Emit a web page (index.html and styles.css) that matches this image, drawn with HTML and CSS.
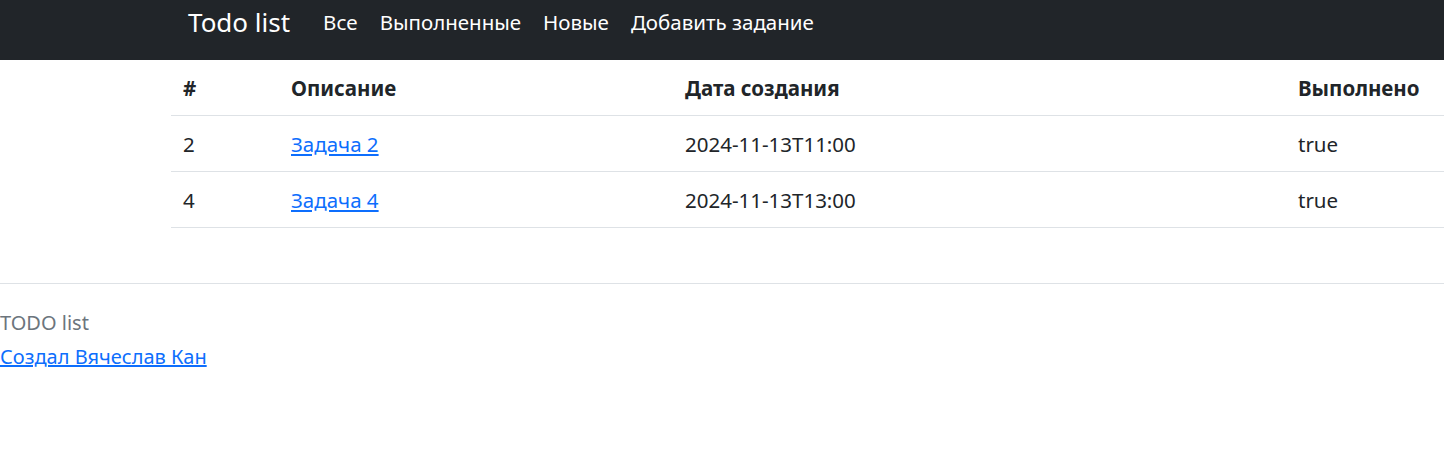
FILE: index.html
```html
<!DOCTYPE html>
<html lang="ru">
<head>
<meta charset="utf-8">
<title>Todo list</title>
<link rel="stylesheet" href="styles.css">
</head>
<body>
<header class="navbar">
  <div class="navbar-inner">
    <a class="brand" href="#">Todo list</a>
    <nav class="nav">
      <a class="nav-link" href="#">Все</a>
      <a class="nav-link" href="#">Выполненные</a>
      <a class="nav-link" href="#">Новые</a>
      <a class="nav-link" href="#">Добавить задание</a>
    </nav>
  </div>
</header>
<main class="main">
  <table class="table">
    <thead>
      <tr>
        <th class="c1">#</th>
        <th class="c2">Описание</th>
        <th class="c3">Дата создания</th>
        <th class="c4">Выполнено</th>
      </tr>
    </thead>
    <tbody>
      <tr>
        <td>2</td>
        <td><a href="#">Задача 2</a></td>
        <td>2024-11-13T11:00</td>
        <td>true</td>
      </tr>
      <tr>
        <td>4</td>
        <td><a href="#">Задача 4</a></td>
        <td>2024-11-13T13:00</td>
        <td>true</td>
      </tr>
    </tbody>
  </table>
</main>
<footer class="footer">
  <div class="footer-title">TODO list</div>
  <a class="footer-link" href="#">Создал Вячеслав Кан</a>
</footer>
</body>
</html>
```

FILE: styles.css
```css
html, body {
  margin: 0;
  padding: 0;
  overflow: hidden;
}
body {
  font-family: "Noto Sans", "Open Sans", sans-serif;
  font-size: 20px;
  line-height: 1.5;
  color: #212529;
  background: #fff;
}
a { color: #0d6efd; }

.navbar {
  background: #212529;
  height: 60px;
  display: flex;
  align-items: center;
}
.navbar-inner {
  display: flex;
  align-items: center;
  padding-left: 188px;
  margin-top: -16px;
}
.brand {
  color: #fff;
  text-decoration: none;
  font-size: 26px;
  margin-right: 33px;
}
.nav {
  display: flex;
  gap: 22px;
}
.nav-link {
  color: #fff;
  text-decoration: none;
  font-size: 20.5px;
}

.main {
  padding-left: 171px;
  padding-bottom: 55px;
}
.table {
  border-collapse: collapse;
  width: 1273px;
}
.table th, .table td {
  text-align: left;
  padding: 2px 12px 0;
  height: 53px;
  border-bottom: 1px solid #dee2e6;
  font-size: 20.5px;
  white-space: nowrap;
}
.table th { font-weight: 700; }
.c1 { width: 84px; }
.c2 { width: 370px; }
.c3 { width: 589px; }

.footer {
  border-top: 1px solid #dee2e6;
  padding-top: 22px;
  font-size: 20px;
}
.footer-title { color: #6c757d; line-height: 34px; }
.footer-link { line-height: 34px; }
```
